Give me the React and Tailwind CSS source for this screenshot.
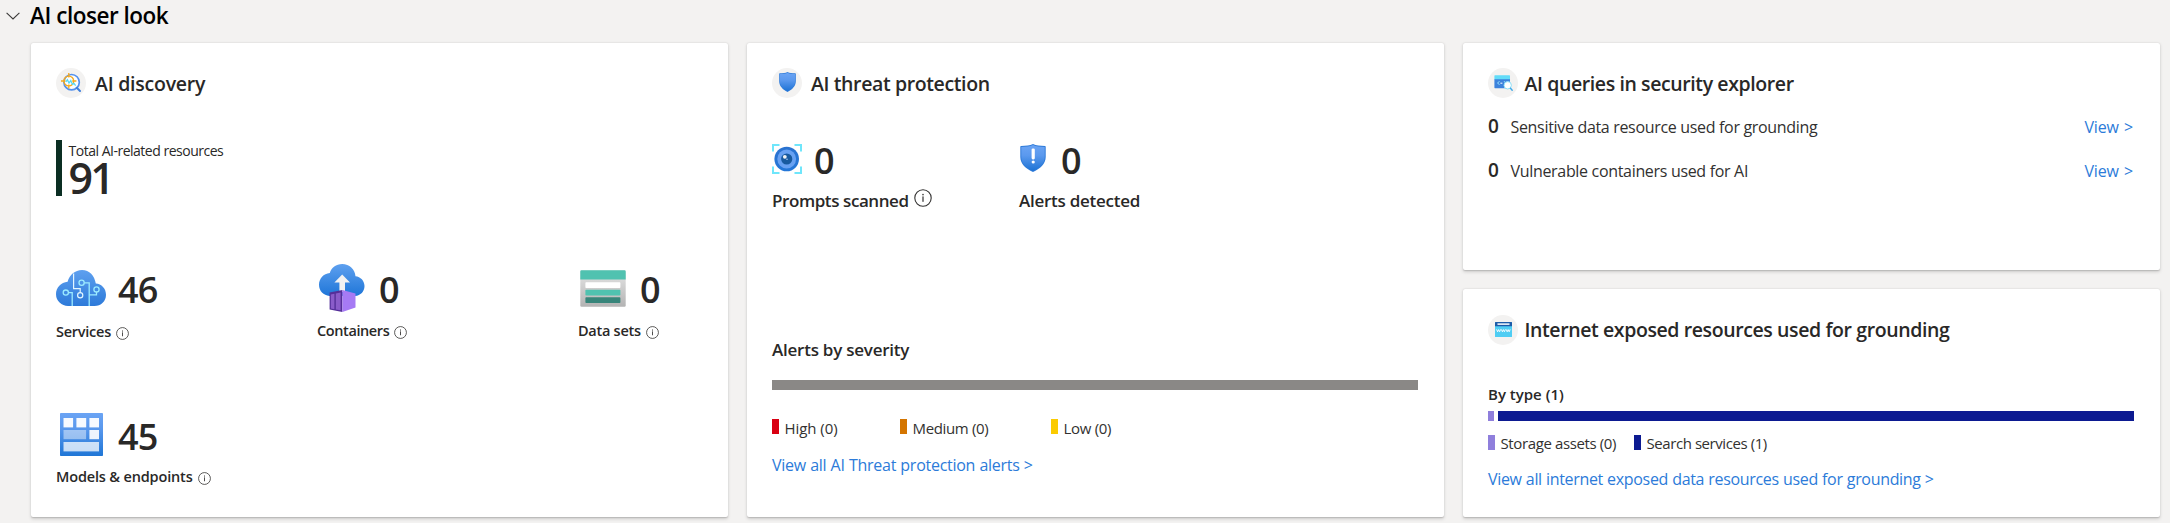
import React from "react";

function InfoIcon({ className }) {
  return (
    <svg viewBox="0 0 18 18" className={`shrink-0 ${className}`} fill="none">
      <circle cx="9" cy="9" r="8.2" stroke="#323130" strokeWidth="1.1" />
      <rect x="8.4" y="7.4" width="1.2" height="5.4" fill="#323130" />
      <rect x="8.3" y="4.9" width="1.4" height="1.4" fill="#323130" />
    </svg>
  );
}

function CloudCircuit() {
  return (
    <svg viewBox="0 0 50 36" className="h-[36px] w-[50px]" fill="none">
      <defs>
        <linearGradient id="cc" x1="0" y1="0" x2="0" y2="1">
          <stop offset="0" stopColor="#5ea0ef" />
          <stop offset="1" stopColor="#2d7ad9" />
        </linearGradient>
      </defs>
      <path d="M12 36A12 12 0 0 1 0 24.2C0 17.5 5 12.5 11.6 11.8C13.5 5 19 0 26 0C33.5 0 38.5 5.5 39.8 13.6C45.5 14 50 18.5 50 24.8C50 31.5 45 36 38.5 36Z" fill="url(#cc)" />
      <g stroke="#9cebff" strokeWidth="1.3">
        <circle cx="9.8" cy="22.6" r="2.6" />
        <path d="M12.4 22.6H16.2V36" />
        <circle cx="25.6" cy="12.8" r="2.6" />
        <path d="M28.2 12.8H33.2V36" />
        <circle cx="40.5" cy="19.4" r="2.6" />
        <path d="M40.5 22V24.8H33.2" />
      </g>
      <g stroke="#e3f6ff" strokeWidth="1.2">
        <path d="M17.6 3.5V18.6H24.2V22.6" />
        <circle cx="24.2" cy="25.2" r="2.6" />
      </g>
    </svg>
  );
}

function CloudContainer() {
  return (
    <svg viewBox="0 0 46 48" className="h-[48px] w-[46px]" fill="none">
      <defs>
        <linearGradient id="cn" x1="0" y1="0" x2="0" y2="1">
          <stop offset="0" stopColor="#5ea0ef" />
          <stop offset="1" stopColor="#1f76d8" />
        </linearGradient>
      </defs>
      <path d="M10.5 32C4.5 31.5 0 27 0 20.8C0 14.5 4.5 9.5 10.8 8.9C12.5 3.5 17 0 23.2 0C30.5 0 35.8 5 36.5 12.2C41.5 12.6 45.5 16.8 45.5 22C45.5 27.5 41.5 31.5 36.2 32Z" fill="url(#cn)" />
      <path d="M23.2 10.4L31 18.6H26V28H20.4V18.6H15.4Z" fill="#f2f2f2" />
      <path d="M10.6 28.6L23.4 26V48L10.6 45.6Z" fill="#552f99" />
      <path d="M23.4 26L36.5 29.6V43.6L23.4 48Z" fill="#a67af4" />
      <path d="M11.8 30.4L15.4 29.8V45.2L11.8 44.6Z M16.8 29.5L21.6 28.6V46.2L16.8 45.4Z" fill="#8a5cc9" />
    </svg>
  );
}

function DataTable() {
  return (
    <svg viewBox="0 0 46 37" className="h-[37px] w-[46px]">
      <defs>
        <linearGradient id="dt" x1="0" y1="0" x2="0" y2="1">
          <stop offset="0" stopColor="#e6e6e6" />
          <stop offset="1" stopColor="#b3b3b3" />
        </linearGradient>
      </defs>
      <rect x=".3" y=".3" width="45.4" height="36.4" rx="1.2" fill="url(#dt)" />
      <path d="M.3 1.5A1.2 1.2 0 0 1 1.5.3H44.5A1.2 1.2 0 0 1 45.7 1.5V9.6H.3Z" fill="#50c2b0" />
      <rect x="5.4" y="12.2" width="35" height="5.8" rx=".8" fill="#fff" />
      <rect x="5.4" y="19.8" width="35" height="5.8" rx=".8" fill="#50c2b0" />
      <rect x="5.4" y="27.2" width="35" height="5.8" rx=".8" fill="#37857a" />
    </svg>
  );
}

function ModelsGrid() {
  return (
    <svg viewBox="0 0 43 43" className="-mt-[2px] h-[43px] w-[43px]">
      <defs>
        <linearGradient id="mg" x1="0" y1="0" x2="0" y2="1">
          <stop offset="0" stopColor="#6ba4f4" />
          <stop offset=".35" stopColor="#5a98ed" />
          <stop offset="1" stopColor="#1f76d6" />
        </linearGradient>
      </defs>
      <rect width="43" height="43" rx=".8" fill="url(#mg)" />
      <g fill="#fff">
        <rect x="3.5" y="5" width="9.6" height="9.4" opacity=".95" />
        <rect x="16.4" y="5" width="9.8" height="9.4" opacity=".95" />
        <rect x="29.4" y="5" width="9.6" height="9.4" opacity=".95" />
        <rect x="3.5" y="17" width="22.6" height="9.2" opacity=".45" />
        <rect x="29.4" y="17" width="9.6" height="9.2" opacity=".9" />
        <rect x="3.5" y="29" width="35.5" height="9.4" opacity=".75" />
      </g>
    </svg>
  );
}

function PromptEye() {
  return (
    <svg viewBox="0 0 30 30" className="h-[30px] w-[30px]" fill="none">
      <defs>
        <linearGradient id="pe" x1="0" y1="0" x2="0" y2="1">
          <stop offset="0" stopColor="#2a72d0" />
          <stop offset="1" stopColor="#2477d8" />
        </linearGradient>
      </defs>
      <path d="M1 7.5V1H7.5M22.5 1H29V7.5M29 22.5V29H22.5M7.5 29H1V22.5" stroke="#6fe6fb" strokeWidth="2" />
      <circle cx="14.7" cy="15" r="12.3" fill="url(#pe)" />
      <circle cx="14.7" cy="15" r="9.4" fill="#68a1f2" />
      <circle cx="14.7" cy="15" r="5.6" fill="#185a9f" />
      <circle cx="12.8" cy="12.8" r="1.9" fill="#f2f2f2" />
      <circle cx="15" cy="15.2" r=".8" fill="#a9c7ee" />
    </svg>
  );
}

function Shield({ className, alert }) {
  const id = alert ? "sha" : "shp";
  return (
    <svg viewBox="0 0 26 28" className={className} preserveAspectRatio="none">
      <defs>
        <linearGradient id={id} x1="0" y1="0" x2="0" y2="1">
          <stop offset="0" stopColor="#6ba4f4" />
          <stop offset=".4" stopColor="#5b99ee" />
          <stop offset="1" stopColor="#1c72d4" />
        </linearGradient>
      </defs>
      <path d="M13 0C10 1.7 6 1.8 1 1.9Q.3 1.9.3 2.8V13C.3 20 6 24.8 13 28C20 24.8 25.7 20 25.7 13V2.8Q25.7 1.9 25 1.9C20 1.8 16 1.7 13 0Z" fill="#2f7bd9" />
      <path d="M13 1C10 2.7 6 2.8 1.3 2.9V13C1.3 19.4 6.5 23.9 13 27C19.5 23.9 24.7 19.4 24.7 13V2.9C20 2.8 16 2.7 13 1Z" fill={`url(#${id})`} />
      {alert && <rect x="11.6" y="4.4" width="3.2" height="11" rx="1.3" fill="#fff" />}
      {alert && <circle cx="13.2" cy="18" r="1.6" fill="#fff" />}
    </svg>
  );
}

function DiscoveryIcon() {
  return (
    <svg viewBox="0 0 20 20" className="-mt-[1px] h-[20px] w-[20px]" fill="none">
      <circle cx="10.6" cy="9.2" r="7.7" stroke="#5290ee" strokeWidth="1.7" fill="#fbfdff" />
      <path d="M15.8 14.8L19 18" stroke="#3f80dd" strokeWidth="2" strokeLinecap="round" />
      <circle cx="7.8" cy="8" r="4.9" stroke="#f5a91d" strokeWidth="1.3" />
      <path d="M7.8 0V4.6M7.8 11.4V15.4M0 8H4.4M11.2 8H15.4" stroke="#f5a91d" strokeWidth="1.3" />
      <path d="M4.8 8.8L6.4 6.8L8 10L9.8 7.6L11.4 11.4L13 10.4L14.6 12.6" stroke="#54d8f5" strokeWidth="1.3" />
    </svg>
  );
}

function QueryIcon() {
  return (
    <svg viewBox="0 0 19 16" className="h-[16px] w-[19px]" fill="none">
      <path d="M.4 4H16V13.2H1Q.4 13.2.4 12.6Z" fill="#3d82dc" />
      <path d="M.4 .8Q.4 .2 1 .2H15.4Q16 .2 16 .8V4.2H.4Z" fill="#63dcf8" />
      <path d="M5.4 6.2L3.6 8L5.4 9.8M10 6.2L11 7.2" stroke="#9be9ff" strokeWidth="1" />
      <path d="M6.4 8.2H8.4" stroke="#fff" strokeWidth="1" />
      <circle cx="13.7" cy="10.3" r="3.7" fill="#fff" stroke="#8ddff8" strokeWidth="1" />
      <path d="M16.5 13.2L18.2 15.2" stroke="#3fa9e8" strokeWidth="1.4" strokeLinecap="round" />
    </svg>
  );
}

function WwwIcon() {
  return (
    <svg viewBox="0 0 17 15" className="h-[15px] w-[17px]" fill="none">
      <rect width="17" height="15" rx=".6" fill="#4fcdf3" />
      <path d="M0 .6Q0 0 .6 0H16.4Q17 0 17 .6V4.2H0Z" fill="#1c5ba8" />
      <rect x="2.4" y="1.2" width="12.2" height="1.7" rx=".4" fill="#dce6f2" />
      <path d="M1.6 7.4L2.6 9.8L3.6 7.6L4.6 9.8L5.6 7.4M6.4 7.4L7.4 9.8L8.4 7.6L9.4 9.8L10.4 7.4M11.2 7.4L12.2 9.8L13.2 7.6L14.2 9.8L15.2 7.4" stroke="#fff" strokeWidth=".9" />
    </svg>
  );
}

function Card({ className = "", children }) {
  return (
    <section className={`flex flex-col rounded-[2px] bg-white px-[25.5px] pt-[25.5px] shadow-[0_1.6px_3.6px_rgba(0,0,0,0.15),0_0.3px_1.2px_rgba(0,0,0,0.14)] ${className}`}>
      {children}
    </section>
  );
}

function CardTitle({ icon, gap, spacing, children }) {
  return (
    <div className={`flex h-[30px] shrink-0 ${gap}`}>
      <span className="flex h-[30px] w-[30px] items-center justify-center rounded-full bg-[#f3f2f1]">{icon}</span>
      <h3 className={`text-[19.5px] font-semibold ${spacing}`}>{children}</h3>
    </div>
  );
}

function Metric({ icon, value, label, labelClass, spacing }) {
  return (
    <div className="w-[261px] shrink-0">
      <div className="flex h-[48px] items-center">
        <span className="flex w-[50px] justify-center">{icon}</span>
        <span className="ml-[12px] pt-[3px] text-[36px] leading-[48px] font-semibold tracking-[-0.8px]">{value}</span>
      </div>
      <div className={`flex gap-[5px] ${labelClass}`}>
        <span className={`text-[14.5px] leading-[22px] font-semibold ${spacing}`}>{label}</span>
        <InfoIcon className="mt-[5.5px] h-[13px] w-[13px]" />
      </div>
    </div>
  );
}

function Legend({ color, className, spacing, children }) {
  return (
    <div className={`flex shrink-0 gap-[5.5px] ${className}`}>
      <span className={`mt-[1px] h-[15px] w-[7px] ${color}`} />
      <span className={`text-[15px] text-[#323130] ${spacing}`}>{children}</span>
    </div>
  );
}

function QueryRow({ className, spacing, children }) {
  return (
    <div className={`flex h-[20px] items-baseline ${className}`}>
      <span className="w-[22.5px] text-[19px] leading-[20px] font-semibold">0</span>
      <span className={`text-[16px] leading-[20px] text-[#323130] ${spacing}`}>{children}</span>
      <a className="mr-[1px] ml-auto text-[16px] leading-[20px] tracking-[-0.22px] text-[#2c7bd9] [word-spacing:1.5px]">View &gt;</a>
    </div>
  );
}

export default function App() {
  return (
    <main className="flex h-[523px] w-[2170px] flex-col overflow-hidden bg-[#f3f2f1] font-['Open_Sans',sans-serif] whitespace-nowrap text-[#292827]">
      <header className="flex h-[42.5px] shrink-0 pl-[5.5px]">
        <svg viewBox="0 0 14 8" className="mt-[11.5px] h-[8px] w-[14px]" fill="none">
          <path d="M.6 .8L7 7L13.4 .8" stroke="#3b3a39" strokeWidth="1.1" />
        </svg>
        <h2 className="ml-[10.5px] text-[22.5px] leading-[31px] font-semibold tracking-[-0.47px] text-black">AI closer look</h2>
      </header>

      <div className="grid h-[474px] grid-cols-3 gap-[19px] pr-[10.5px] pl-[30.5px]">
        <Card>
          <CardTitle icon={<DiscoveryIcon />} gap="gap-[9px]" spacing="leading-[32px] tracking-[-0.24px]">AI discovery</CardTitle>
          <div className="mt-[42px] flex h-[56px] gap-[6.5px]">
            <span className="w-[6px] bg-[#0b2e23]" />
            <div className="flex flex-col pt-[2px]">
              <span className="text-[14px] leading-[17px] font-medium tracking-[-0.49px]">Total AI-related resources</span>
              <span className="text-[43px] leading-[37px] font-semibold tracking-[-2.8px]">91</span>
            </div>
          </div>
          <div className="mt-[68px] flex">
            <Metric icon={<CloudCircuit />} value="46" label="Services" labelClass="mt-[9px]" spacing="tracking-[-0.25px]" />
            <Metric icon={<CloudContainer />} value="0" label="Containers" labelClass="mt-[8px]" spacing="tracking-[-0.4px]" />
            <Metric icon={<DataTable />} value="0" label="Data sets" labelClass="mt-[8px]" spacing="tracking-[-0.27px]" />
          </div>
          <div className="mt-[68px] flex">
            <Metric icon={<ModelsGrid />} value="45" label="Models & endpoints" labelClass="mt-[7px]" spacing="tracking-[-0.16px]" />
          </div>
        </Card>

        <Card>
          <CardTitle icon={<Shield className="-mt-[3px] h-[20px] w-[17px]" />} gap="gap-[9px]" spacing="leading-[32px] tracking-[-0.38px]">AI threat protection</CardTitle>
          <div className="mt-[46px] flex">
            <div className="w-[247px]">
              <div className="flex h-[30px] gap-[12px]">
                <PromptEye />
                <span className="text-[36px] leading-[33px] font-semibold">0</span>
              </div>
              <div className="mt-[14px] flex gap-[5px]">
                <span className="text-[17px] leading-[26px] font-semibold tracking-[-0.42px]">Prompts scanned</span>
                <InfoIcon className="mt-px h-[18px] w-[18px]" />
              </div>
            </div>
            <div>
              <div className="flex h-[30px] gap-[12px]">
                <span className="flex w-[30px] pl-[1px]"><Shield alert className="h-[28px] w-[26px]" /></span>
                <span className="text-[36px] leading-[33px] font-semibold">0</span>
              </div>
              <div className="mt-[14px] text-[17px] leading-[26px] font-semibold tracking-[-0.26px]">Alerts detected</div>
            </div>
          </div>
          <div className="mt-[123px] text-[17px] leading-[26px] font-semibold tracking-[-0.24px]">Alerts by severity</div>
          <div className="mt-[17px] h-[10px] bg-[#8a8886]" />
          <div className="mt-[28px] flex h-[20px]">
            <Legend color="bg-[#d90012]" className="w-[128px]" spacing="leading-[21px] tracking-[-0.05px]">High (0)</Legend>
            <Legend color="bg-[#d47500]" className="w-[151px]" spacing="leading-[21px] tracking-[-0.35px]">Medium (0)</Legend>
            <Legend color="bg-[#fbcb00]" className="" spacing="leading-[21px] tracking-[-0.3px]">Low (0)</Legend>
          </div>
          <a className="mt-[16px] text-[16px] leading-[22px] tracking-[-0.27px] text-[#2c7bd9] [word-spacing:0.4px]">View all AI Threat protection alerts &gt;</a>
        </Card>

        <div className="grid grid-rows-2 gap-[19px]">
          <Card>
            <CardTitle icon={<QueryIcon />} gap="gap-[6.5px]" spacing="leading-[31px] tracking-[-0.4px]">AI queries in security explorer</CardTitle>
            <QueryRow className="mt-[17.5px]" spacing="tracking-[-0.32px]">Sensitive data resource used for grounding</QueryRow>
            <QueryRow className="mt-[24px]" spacing="tracking-[-0.32px]">Vulnerable containers used for AI</QueryRow>
          </Card>
          <Card>
            <CardTitle icon={<WwwIcon />} gap="gap-[6.5px]" spacing="leading-[29px] tracking-[-0.4px]">Internet exposed resources used for grounding</CardTitle>
            <div className="mt-[39px] text-[15px] leading-[20px] font-semibold">By type (1)</div>
            <div className="mt-[7.5px] flex h-[10px] gap-[4px]">
              <span className="w-[6px] bg-[#8f7fdc]" />
              <span className="flex-1 bg-[#0c1a91]" />
            </div>
            <div className="mt-[13px] flex h-[20px]">
              <Legend color="bg-[#8f7fdc]" className="w-[146px]" spacing="leading-[19px] tracking-[-0.38px]">Storage assets (0)</Legend>
              <Legend color="bg-[#0c1a91]" className="" spacing="leading-[19px] tracking-[-0.43px]">Search services (1)</Legend>
            </div>
            <a className="mt-[14px] text-[16px] leading-[22px] tracking-[-0.32px] text-[#2c7bd9] [word-spacing:0.3px]">View all internet exposed data resources used for grounding &gt;</a>
          </Card>
        </div>
      </div>
    </main>
  );
}
